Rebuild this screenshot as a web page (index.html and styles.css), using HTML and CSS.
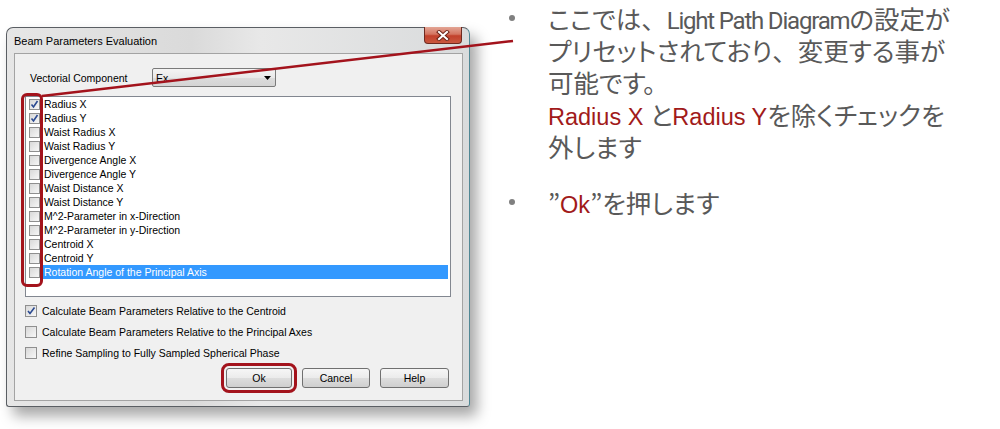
FILE: index.html
```html
<!DOCTYPE html>
<html>
  <head>
    <title>Beam Parameters Evaluation</title>
    <link rel="stylesheet" href="styles.css">
  </head>
  <body>
    <div class="slide">
      <div class="dialog">
        <div class="titlebar">
          <span class="title">Beam Parameters Evaluation</span>
          <span class="close">
            <svg width="14" height="11" viewBox="0 0 14 11">
              <path d="M3 2 L11 9 M11 2 L3 9" stroke="#6b2418" stroke-width="4" stroke-linecap="square" fill="none"/>
              <path d="M3 2 L11 9 M11 2 L3 9" stroke="#fff" stroke-width="2" stroke-linecap="square" fill="none"/>
            </svg>
          </span>
        </div>
        <div class="client">
          <div class="field">
            <span class="field-label">Vectorial Component</span>
            <div class="select">
              <span>Ex</span>
              <svg width="7" height="4" viewBox="0 0 7 4"><path d="M0 0 H7 L3.5 4 Z" fill="#000"/></svg>
            </div>
          </div>

          <div class="listbox">
            <div class="mark"></div>
            <div class="item"><span class="cb on"><svg width="9" height="9" viewBox="0 0 9 9"><path d="M1.5 4.5 L3.5 7 L7.5 1" stroke="#2b4a91" stroke-width="1.6" fill="none"/></svg></span><span class="item-text">Radius X</span></div>
            <div class="item"><span class="cb on"><svg width="9" height="9" viewBox="0 0 9 9"><path d="M1.5 4.5 L3.5 7 L7.5 1" stroke="#2b4a91" stroke-width="1.6" fill="none"/></svg></span><span class="item-text">Radius Y</span></div>
            <div class="item"><span class="cb"></span><span class="item-text">Waist Radius X</span></div>
            <div class="item"><span class="cb"></span><span class="item-text">Waist Radius Y</span></div>
            <div class="item"><span class="cb"></span><span class="item-text">Divergence Angle X</span></div>
            <div class="item"><span class="cb"></span><span class="item-text">Divergence Angle Y</span></div>
            <div class="item"><span class="cb"></span><span class="item-text">Waist Distance X</span></div>
            <div class="item"><span class="cb"></span><span class="item-text">Waist Distance Y</span></div>
            <div class="item"><span class="cb"></span><span class="item-text">M^2-Parameter in x-Direction</span></div>
            <div class="item"><span class="cb"></span><span class="item-text">M^2-Parameter in y-Direction</span></div>
            <div class="item"><span class="cb"></span><span class="item-text">Centroid X</span></div>
            <div class="item"><span class="cb"></span><span class="item-text">Centroid Y</span></div>
            <div class="item selected"><span class="cb"></span><span class="item-text">Rotation Angle of the Principal Axis</span></div>
          </div>

          <div class="opts">
            <div class="opt"><span class="cb big on"><svg width="10" height="10" viewBox="0 0 10 10"><path d="M2 5 L4 7.5 L8.5 1.5" stroke="#2b4a91" stroke-width="1.6" fill="none"/></svg></span>Calculate Beam Parameters Relative to the Centroid</div>
            <div class="opt"><span class="cb big"></span>Calculate Beam Parameters Relative to the Principal Axes</div>
            <div class="opt"><span class="cb big"></span>Refine Sampling to Fully Sampled Spherical Phase</div>
          </div>

          <div class="buttons">
            <button class="btn btn-ok">Ok</button>
            <button class="btn btn-cancel">Cancel</button>
            <button class="btn btn-help">Help</button>
          </div>
        </div>
      </div>

      <ul class="notes">
        <li>
          <span class="dot"></span>
          <div class="note">
            <span class="line">ここでは<span class="punct">、</span><span class="latin">Light Path Diagram</span>の設定が</span>
            <span class="line">プリセットされており<span class="punct">、</span>変更する事が</span>
            <span class="line">可能です。</span>
            <span class="line"><span class="red">Radius X </span>と<span class="red">Radius Y</span>を除くチェックを</span>
            <span class="line">外します</span>
          </div>
        </li>
        <li>
          <span class="dot"></span>
          <div class="note">
            <span class="line">”<span class="red">Ok</span>”を押します</span>
          </div>
        </li>
      </ul>
    </div>

    <svg class="pointer" width="1000" height="429" viewBox="0 0 1000 429">
      <line x1="42" y1="96" x2="513" y2="41" stroke="#a3131c" stroke-width="2.5"/>
    </svg>
  </body>
</html>
```

FILE: styles.css
```css
body {
  margin: 0;
  background: #fff;
  width: 1000px;
  height: 429px;
  overflow: hidden;
  position: relative;
  font-family: "Liberation Sans", Arial, sans-serif;
}

.slide {
  display: flex;
  align-items: flex-start;
}

/* dialog window */

.dialog {
  margin: 27px 0 0 6px;
  width: 464px;
  height: 380px;
  box-sizing: border-box;
  flex-shrink: 0;
  display: flex;
  flex-direction: column;
  padding: 0 6px 5px 7px;
  border: 1px solid #5a5e63;
  border-right-color: #4f8794;
  border-radius: 7px 7px 3px 3px;
  background: linear-gradient(to right, #e6e6e6, #dadada 40%, #e8e8e8 55%, #d9dbdc);
  box-shadow: 7px 9px 14px rgba(0, 0, 0, 0.35);
}

.titlebar {
  height: 25px;
  flex-shrink: 0;
  display: flex;
  justify-content: space-between;
  align-items: flex-start;
}

.title {
  font-size: 11px;
  color: #000;
  margin-top: 7px;
}

.close {
  width: 38px;
  height: 17px;
  margin: -1px 1px 0 0;
  box-sizing: border-box;
  display: flex;
  align-items: center;
  justify-content: center;
  border: 1px solid #6e2a20;
  border-top: none;
  border-radius: 0 0 4px 4px;
  background: linear-gradient(#e3a595, #d47460 45%, #c2402b 55%, #c9573f);
}

.client {
  flex: 1;
  background: #f0f0f0;
  border: 1px solid #a3a3a3;
  padding: 0 13px 0 10px;
  font-size: 10.5px;
  color: #000;
}

.field {
  margin-top: 14px;
  height: 19px;
  display: flex;
  align-items: center;
}

.field-label {
  width: 122px;
  margin-left: 5px;
}

.select {
  width: 124px;
  height: 19px;
  box-sizing: border-box;
  border: 1px solid #7a7a7a;
  border-radius: 2px;
  background: linear-gradient(#f4f4f4, #e9e9e9 50%, #dcdcdc 51%, #d4d4d4);
  display: flex;
  align-items: center;
  justify-content: space-between;
  padding: 0 4px 0 3px;
}

.listbox {
  position: relative;
  margin-top: 9px;
  width: 426px;
  height: 201px;
  box-sizing: border-box;
  border: 1px solid #828790;
  background: #fff;
}

.mark {
  position: absolute;
  left: -5px;
  top: -4px;
  width: 22px;
  height: 194px;
  box-sizing: border-box;
  border: 3px solid #a3131c;
  border-radius: 6px;
}

.item {
  height: 14px;
  display: flex;
  align-items: center;
  padding-left: 3px;
}

.item-text {
  flex: 1;
  margin: 0 2px;
  padding: 0 2px;
  line-height: 14px;
}

.item.selected .item-text {
  background: #3399ff;
  color: #fff;
}

.cb {
  width: 11px;
  height: 11px;
  box-sizing: border-box;
  flex-shrink: 0;
  border: 1px solid #8f8f8f;
  background: linear-gradient(135deg, #d8d8d8, #f7f7f7);
  display: flex;
  align-items: center;
  justify-content: center;
}

.cb.big {
  width: 12px;
  height: 12px;
}

.opts {
  margin-top: 3px;
}

.opt {
  height: 21px;
  display: flex;
  align-items: center;
  gap: 5px;
}

.buttons {
  display: flex;
  justify-content: flex-end;
  gap: 10px;
  margin-top: 5px;
}

.btn {
  height: 20px;
  padding: 0;
  font-family: "Liberation Sans", Arial, sans-serif;
  font-size: 10.5px;
  color: #000;
  border: 1px solid #707070;
  border-radius: 3px;
  background: linear-gradient(#f6f6f6, #ebebeb 50%, #dddddd 51%, #cfcfcf);
}

.btn-ok {
  width: 66px;
  outline: 3px solid #a3131c;
  outline-offset: 2px;
}

.btn-cancel {
  width: 68px;
}

.btn-help {
  width: 69px;
}

/* notes on the right */

.notes {
  list-style: none;
  margin: 2px 0 0 39px;
  padding: 0;
}

.notes li {
  display: flex;
  align-items: flex-start;
}

.notes li + li {
  margin-top: 24px;
}

.dot {
  width: 6px;
  height: 6px;
  border-radius: 50%;
  background: #808080;
  margin: 13px 33px 0 0;
  flex-shrink: 0;
}

.note {
  font-family: "Noto Sans CJK JP", sans-serif;
  font-feature-settings: "palt";
  font-size: 25.5px;
  color: #595959;
}

.line {
  display: block;
  height: 32px;
  line-height: 32px;
  white-space: nowrap;
}

.punct {
  font-feature-settings: normal;
}

.latin {
  font-family: Roboto, "Liberation Sans", sans-serif;
  font-size: 24px;
  letter-spacing: -1.2px;
}

.red {
  font-family: "Liberation Sans", Arial, sans-serif;
  font-size: 23.5px;
  color: #a11a1a;
}

.pointer {
  position: absolute;
  top: 0;
  left: 0;
  pointer-events: none;
}
```
